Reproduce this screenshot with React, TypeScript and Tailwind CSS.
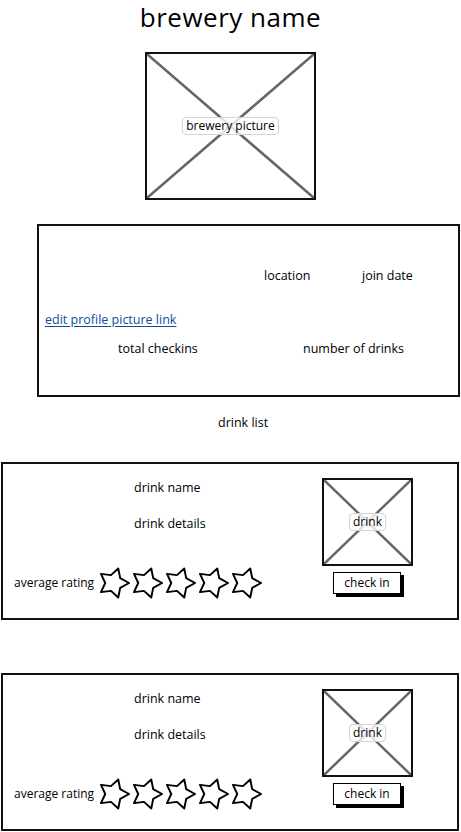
const font = { fontFamily: '"Open Sans", "Liberation Sans", sans-serif' };

const Placeholder = ({ label, className }: { label: string; className: string }) => (
	<div className={`relative border-2 border-[#111] bg-white ${className}`}>
		<svg className="absolute inset-0 h-full w-full" preserveAspectRatio="none" viewBox="0 0 100 100">
			<line x1="0" y1="0" x2="100" y2="100" stroke="#666" strokeWidth="2.5" vectorEffect="non-scaling-stroke" />
			<line x1="100" y1="0" x2="0" y2="100" stroke="#666" strokeWidth="2.5" vectorEffect="non-scaling-stroke" />
		</svg>
		<div className="absolute inset-0 flex items-center justify-center">
			<span className="rounded-[4px] border border-[#d4d4d4] bg-white/80 px-[3px] text-[12px] leading-[16px] text-black">
				{label}
			</span>
		</div>
	</div>
);

const Star = () => (
	<svg width="33" height="32" viewBox="0 0 34 32">
		<polygon
			points="33,16 23.9,21 21.9,31 14.4,24.1 4.1,25.4 8.5,16 4.1,6.6 14.4,7.9 21.9,1 23.9,11"
			fill="white"
			stroke="black"
			strokeWidth="2"
			strokeLinejoin="round"
		/>
	</svg>
);

const DrinkCard = ({ top }: { top: string }) => (
	<div className={`ml-[1px] flex h-[158px] w-[458px] border-2 border-[#111] ${top}`}>
		<div className="flex w-[319px] flex-col text-[12.5px] leading-[18px]">
			<p className="mt-[15px] pl-[131px]">drink name</p>
			<p className="mt-[18px] pl-[131px]">drink details</p>
			<div className="mt-[34px] flex items-center pl-[11px]">
				<span className="mr-[3px] text-[12px]">average rating</span>
				<Star />
				<Star />
				<Star />
				<Star />
				<Star />
			</div>
		</div>
		<div className="flex flex-col items-start">
			<Placeholder label="drink" className="mt-[14px] h-[88px] w-[91px]" />
			<button className="ml-[11px] mt-[6px] h-[22px] w-[68px] border-[1.5px] border-black bg-white text-[12px] leading-none shadow-[3px_3px_0_#000]">
				check in
			</button>
		</div>
	</div>
);

export default function App() {
	return (
		<div className="flex w-[461px] flex-col bg-white pb-[2px] text-black" style={font}>
			<h1 className="mt-[1px] text-center text-[26px] leading-[32px] tracking-[0.5px]">brewery name</h1>
			<Placeholder label="brewery picture" className="mx-auto mt-[19px] h-[148px] w-[171px]" />
			<div className="ml-[37px] mt-[24px] h-[173px] w-[423px] border-2 border-[#111] text-[12.5px] leading-[18px]">
				<div className="mt-[41px] flex">
					<span className="ml-[225px] w-[98px]">location</span>
					<span>join date</span>
				</div>
				<a className="ml-[6px] mt-[26px] inline-block text-[#0b4f9c] underline underline-offset-2" href="#">
					edit profile picture link
				</a>
				<div className="mt-[11px] flex">
					<span className="ml-[79px] w-[185px]">total checkins</span>
					<span>number of drinks</span>
				</div>
			</div>
			<p className="mt-[17px] pl-[218px] text-[12.5px] leading-[18px]">drink list</p>
			<DrinkCard top="mt-[30px]" />
			<DrinkCard top="mt-[53px]" />
		</div>
	);
}
